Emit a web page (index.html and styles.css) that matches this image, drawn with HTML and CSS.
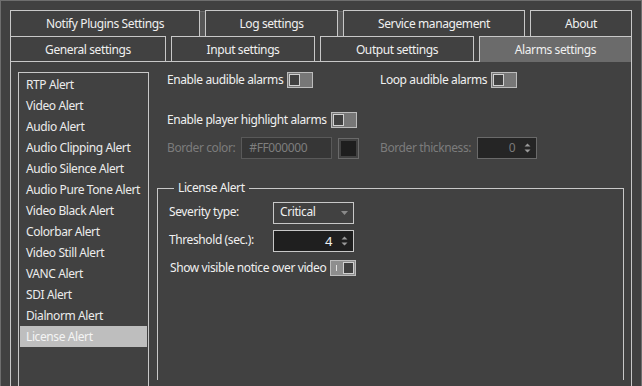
FILE: index.html
```html
<!DOCTYPE html>
<html lang="en">

<head>
    <meta charset="UTF-8">
    <title>Settings - Alarms</title>
    <link rel="stylesheet" href="styles.css">
</head>

<body>
    <div class="window">
        <!-- Tab bar, two stacked rows -->
        <div class="tab-row top-row">
            <div class="tab tab-notify">Notify Plugins Settings</div>
            <div class="tab-gap light"></div>
            <div class="tab tab-log">Log settings</div>
            <div class="tab-gap light"></div>
            <div class="tab tab-service">Service management</div>
            <div class="tab-gap"></div>
            <div class="tab tab-about">About</div>
        </div>
        <div class="tab-row bottom-row">
            <div class="tab tab-general">General settings</div>
            <div class="tab-gap"></div>
            <div class="tab tab-input">Input settings</div>
            <div class="tab-gap"></div>
            <div class="tab tab-output">Output settings</div>
            <div class="tab-gap"></div>
            <div class="tab tab-alarms active">Alarms settings</div>
        </div>

        <div class="panel">
            <ul class="alert-list">
                <li>RTP Alert</li>
                <li>Video Alert</li>
                <li>Audio Alert</li>
                <li>Audio Clipping Alert</li>
                <li>Audio Silence Alert</li>
                <li>Audio Pure Tone Alert</li>
                <li>Video Black Alert</li>
                <li>Colorbar Alert</li>
                <li>Video Still Alert</li>
                <li>VANC Alert</li>
                <li>SDI Alert</li>
                <li>Dialnorm Alert</li>
                <li class="selected">License Alert</li>
            </ul>

            <div class="settings">
                <div class="option-row first">
                    <div class="option col-left">
                        <span>Enable audible alarms</span>
                        <span class="toggle"><span class="knob"></span></span>
                    </div>
                    <div class="option">
                        <span>Loop audible alarms</span>
                        <span class="toggle"><span class="knob"></span></span>
                    </div>
                </div>

                <div class="option-row second">
                    <div class="option">
                        <span>Enable player highlight alarms</span>
                        <span class="toggle"><span class="knob"></span></span>
                    </div>
                </div>

                <div class="option-row third disabled">
                    <div class="option col-left">
                        <span class="field-label">Border color:</span>
                        <span class="text-input">#FF000000</span>
                        <span class="swatch"><span class="swatch-fill"></span></span>
                    </div>
                    <div class="option">
                        <span class="field-label">Border thickness:</span>
                        <span class="spin spin-thickness">
                            <span class="spin-value">0</span>
                            <svg class="spin-arrows" width="7" height="12" viewBox="0 0 7 12">
                                <path d="M0.5 4.5L3.5 1.5L6.5 4.5Z M0.5 7.5L3.5 10.5L6.5 7.5Z" fill="#9a9a9a" />
                            </svg>
                        </span>
                    </div>
                </div>

                <fieldset class="group">
                    <legend>License Alert</legend>
                    <div class="group-grid">
                        <span>Severity type:</span>
                        <span class="combo">Critical
                            <svg class="combo-arrow" width="7" height="4" viewBox="0 0 7 4">
                                <path d="M0 0L7 0L3.5 4Z" fill="#8a8a8a" />
                            </svg>
                        </span>
                        <span>Threshold (sec.):</span>
                        <span class="spin spin-threshold">
                            <span class="spin-value">4</span>
                            <svg class="spin-arrows" width="7" height="12" viewBox="0 0 7 12">
                                <path d="M0.5 4.5L3.5 1.5L6.5 4.5Z M0.5 7.5L3.5 10.5L6.5 7.5Z" fill="#9a9a9a" />
                            </svg>
                        </span>
                    </div>
                    <div class="option notice-row">
                        <span>Show visible notice over video</span>
                        <span class="toggle on"><span class="mark"></span><span class="knob"></span></span>
                    </div>
                </fieldset>
            </div>
        </div>
    </div>
</body>

</html>
```

FILE: styles.css
```css
/* Reset and base styles */
* {
    margin: 0;
    padding: 0;
    box-sizing: border-box;
}

body {
    background-color: #414141;
    color: #f0f0f0;
    font-family: 'Noto Sans', 'Open Sans', sans-serif;
    font-size: 12px;
    letter-spacing: -0.4px;
    line-height: 1.4;
    overflow: hidden;
}

/* Window frame */
.window {
    width: 642px;
    height: 386px;
    border: 1px solid #6e6e6e;
    border-bottom: none;
    padding: 9px 9px 0 9px;
    display: flex;
    flex-direction: column;
}

/* Tabs */
.tab-row {
    display: flex;
}

.tab {
    display: flex;
    align-items: center;
    justify-content: center;
    border: 1px solid #c8c8c8;
    border-bottom: none;
    background-color: #414141;
    white-space: nowrap;
    padding-top: 2px;
}

.top-row .tab {
    height: 26px;
}

.bottom-row .tab {
    height: 25px;
}

.tab.active {
    background-color: #6b6b6b;
    height: 26px;
    margin-bottom: -1px;
    padding-bottom: 1px;
    position: relative;
    z-index: 1;
}

.tab-gap {
    width: 5px;
}

.tab-gap.light {
    background-color: #575757;
    border-top: 1px solid #6a6a6a;
    margin-top: 1px;
}

.tab-notify { width: 190px; }
.tab-log { width: 133px; }
.tab-service { width: 182px; }
.tab-about { width: 102px; }
.tab-general { width: 156px; }
.tab-input { width: 144px; }
.tab-output { width: 154px; }
.tab-alarms { width: 153px; }

/* Panel */
.panel {
    flex: 1;
    display: flex;
    border: 1px solid #c8c8c8;
    border-bottom: none;
    padding: 10px 7px 0 7px;
    gap: 8px;
    overflow: hidden;
}

.alert-list {
    list-style: none;
    width: 131px;
    flex-shrink: 0;
    border: 1px solid #c8c8c8;
    border-bottom: none;
    padding: 1px 1px 0 1px;
}

.alert-list li {
    height: 21px;
    line-height: 21px;
    padding-left: 6px;
    color: #ececec;
    white-space: nowrap;
}

.alert-list li.selected {
    background-color: #bebebe;
    color: #f4f4f4;
}

/* Settings column */
.settings {
    flex: 1;
}

.option-row {
    display: flex;
    padding-left: 10px;
}

.option-row.second {
    margin-top: 24px;
}

.option-row.third {
    margin-top: 9px;
}

.option {
    display: flex;
    align-items: center;
    gap: 4px;
    white-space: nowrap;
}

.col-left {
    width: 213px;
}

.option-row.first .option,
.option-row.second .option {
    height: 16px;
}

/* Toggle switch */
.toggle {
    display: inline-flex;
    align-items: center;
    width: 26px;
    height: 16px;
    border: 1px solid #bcbcbc;
    background-color: #777;
    padding: 1px;
}

.toggle .knob {
    width: 11px;
    height: 12px;
    border: 1px solid #d0d0d0;
    background-color: #404040;
}

.toggle.on {
    background-color: #8e8e8e;
    justify-content: space-between;
}

.toggle .mark {
    width: 1px;
    height: 6px;
    background-color: #e0e0e0;
    margin-left: 4px;
}

/* Disabled fields */
.disabled .field-label {
    color: #7c7c7c;
}

.field-label {
    margin-right: 2px;
}

.text-input {
    width: 91px;
    height: 22px;
    border: 1px solid #595959;
    background-color: #363636;
    color: #7e7e7e;
    padding-left: 7px;
    line-height: 20px;
}

.swatch {
    width: 21px;
    height: 21px;
    margin-left: 2px;
    border: 1px solid #6a6a6a;
    padding: 2px;
}

.swatch-fill {
    display: block;
    width: 100%;
    height: 100%;
    background-color: #1e1e1e;
}

.spin {
    display: flex;
    align-items: center;
    justify-content: flex-end;
    height: 22px;
    background-color: #1f1f1f;
    border: 1px solid #c8c8c8;
    padding-right: 5px;
    gap: 9px;
}

.spin-thickness {
    width: 60px;
    border-color: #6a6a6a;
    color: #7a7a7a;
    background-color: #252525;
}

.spin-threshold {
    width: 81px;
    font-size: 13px;
}

/* Group box */
.group {
    border: 1px solid #c8c8c8;
    border-bottom: none;
    margin-top: 21px;
    padding: 5px 10px 20px 11px;
    min-height: 200px;
}

.group legend {
    padding: 0 4px;
    margin-left: 5px;
}

.group-grid {
    display: grid;
    grid-template-columns: 104px 81px;
    row-gap: 6px;
    align-items: center;
}

.combo {
    display: flex;
    align-items: center;
    justify-content: space-between;
    height: 22px;
    border: 1px solid #c8c8c8;
    padding: 0 5px 0 6px;
}

.notice-row {
    margin-top: 8px;
    margin-left: 1px;
}
```
